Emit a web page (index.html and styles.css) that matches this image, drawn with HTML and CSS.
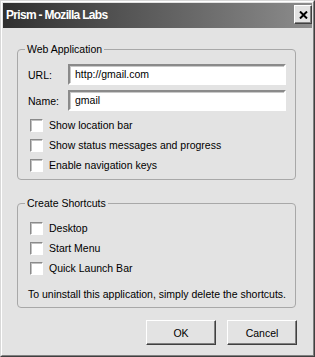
FILE: index.html
```html
<!DOCTYPE html>
<html>
<head>
<meta charset="utf-8">
<title>Prism - Mozilla Labs</title>
<link rel="stylesheet" href="styles.css">
</head>
<body>
<div class="window">
  <div class="frame">
    <div class="titlebar">
      <span class="title">Prism - Mozilla Labs</span>
      <span class="close">
        <svg width="9" height="8" viewBox="0 0 9 8"><path d="M1 0.5 L8 7.5 M8 0.5 L1 7.5" stroke="#000" stroke-width="2" fill="none"/></svg>
      </span>
    </div>
    <div class="content">
      <fieldset class="group group-app">
        <legend>Web Application</legend>
        <div class="field"><span class="label">URL:</span><span class="input">http://gmail.com</span></div>
        <div class="field field-second"><span class="label">Name:</span><span class="input">gmail</span></div>
        <div class="check first"><span class="box"></span><span>Show location bar</span></div>
        <div class="check"><span class="box"></span><span>Show status messages and progress</span></div>
        <div class="check"><span class="box"></span><span>Enable navigation keys</span></div>
      </fieldset>
      <fieldset class="group group-short">
        <legend>Create Shortcuts</legend>
        <div class="check"><span class="box"></span><span>Desktop</span></div>
        <div class="check"><span class="box"></span><span>Start Menu</span></div>
        <div class="check"><span class="box"></span><span>Quick Launch Bar</span></div>
        <p class="note">To uninstall this application, simply delete the shortcuts.</p>
      </fieldset>
      <div class="buttons">
        <span class="button">OK</span>
        <span class="button">Cancel</span>
      </div>
    </div>
  </div>
</div>
</body>
</html>
```
FILE: styles.css
```css
html, body {
  margin: 0;
  padding: 0;
  background: #e3e3e3;
}
body {
  font-family: "Liberation Sans", Arial, sans-serif;
  font-size: 10.5px;
  color: #000;
}
.window {
  box-sizing: border-box;
  width: 315px;
  height: 357px;
  border: 1px solid;
  border-color: #d8d8d8 #404040 #404040 #d8d8d8;
  background: #e3e3e3;
}
.frame {
  box-sizing: border-box;
  height: 100%;
  border: 1px solid;
  border-color: #fff #808080 #808080 #fff;
  padding: 1px;
}
.titlebar {
  height: 25px;
  display: flex;
  align-items: flex-start;
  justify-content: space-between;
  background: linear-gradient(to right, #303030, #8c8c8c);
}
.title {
  color: #fff;
  font-family: "Liberation Sans", Arial, sans-serif;
  font-weight: bold;
  font-size: 12px;
  line-height: 25px;
  padding-left: 3px;
  letter-spacing: -0.7px;
}
.close {
  box-sizing: border-box;
  width: 18px;
  height: 19px;
  margin-top: 2px;
  background: #e3e3e3;
  border: 1px solid;
  border-color: #fff #404040 #404040 #fff;
  box-shadow: inset -1px -1px 0 #808080;
  display: flex;
  align-items: center;
  justify-content: center;
}
.content {
  padding: 14px 16px 0 14px;
}
.group {
  margin: 0;
  padding: 8px 9px 4px 10px;
  border: 1px solid #a8a8a8;
  border-radius: 4px;
}
.group legend {
  margin-left: -3px;
  padding: 0 2px;
  line-height: 14px;
}
.group-short {
  margin-top: 16px;
  padding-bottom: 6px;
}
.field {
  display: flex;
  align-items: center;
  height: 21px;
}
.field-second {
  margin-top: 5px;
  margin-bottom: 4px;
}
.label {
  width: 40px;
}
.input {
  box-sizing: border-box;
  flex: 1;
  height: 21px;
  line-height: 17px;
  background: #fff;
  border: 2px solid;
  border-color: #8a8a8a #fff #fff #8a8a8a;
  box-shadow: inset 1px 1px 0 #c8c8c8;
  padding-left: 5px;
}
.check {
  display: flex;
  align-items: center;
  height: 20px;
}
.box {
  box-sizing: border-box;
  width: 13px;
  height: 13px;
  margin-left: 2px;
  margin-right: 6px;
  background: #fff;
  border: 1px solid;
  border-color: #8a8a8a #fff #fff #8a8a8a;
  box-shadow: inset 1px 1px 0 #c0c0c0;
}
.note {
  margin: 9px 0 0 0;
  line-height: 14px;
  white-space: nowrap;
}
.buttons {
  display: flex;
  justify-content: flex-end;
  gap: 11px;
  margin-top: 12px;
  margin-right: -1px;
}
.button {
  box-sizing: border-box;
  width: 70px;
  height: 25px;
  display: flex;
  align-items: center;
  justify-content: center;
  background: #e3e3e3;
  border: 1px solid;
  border-color: #fff #404040 #404040 #fff;
  box-shadow: inset -1px -1px 0 #808080;
}
```
